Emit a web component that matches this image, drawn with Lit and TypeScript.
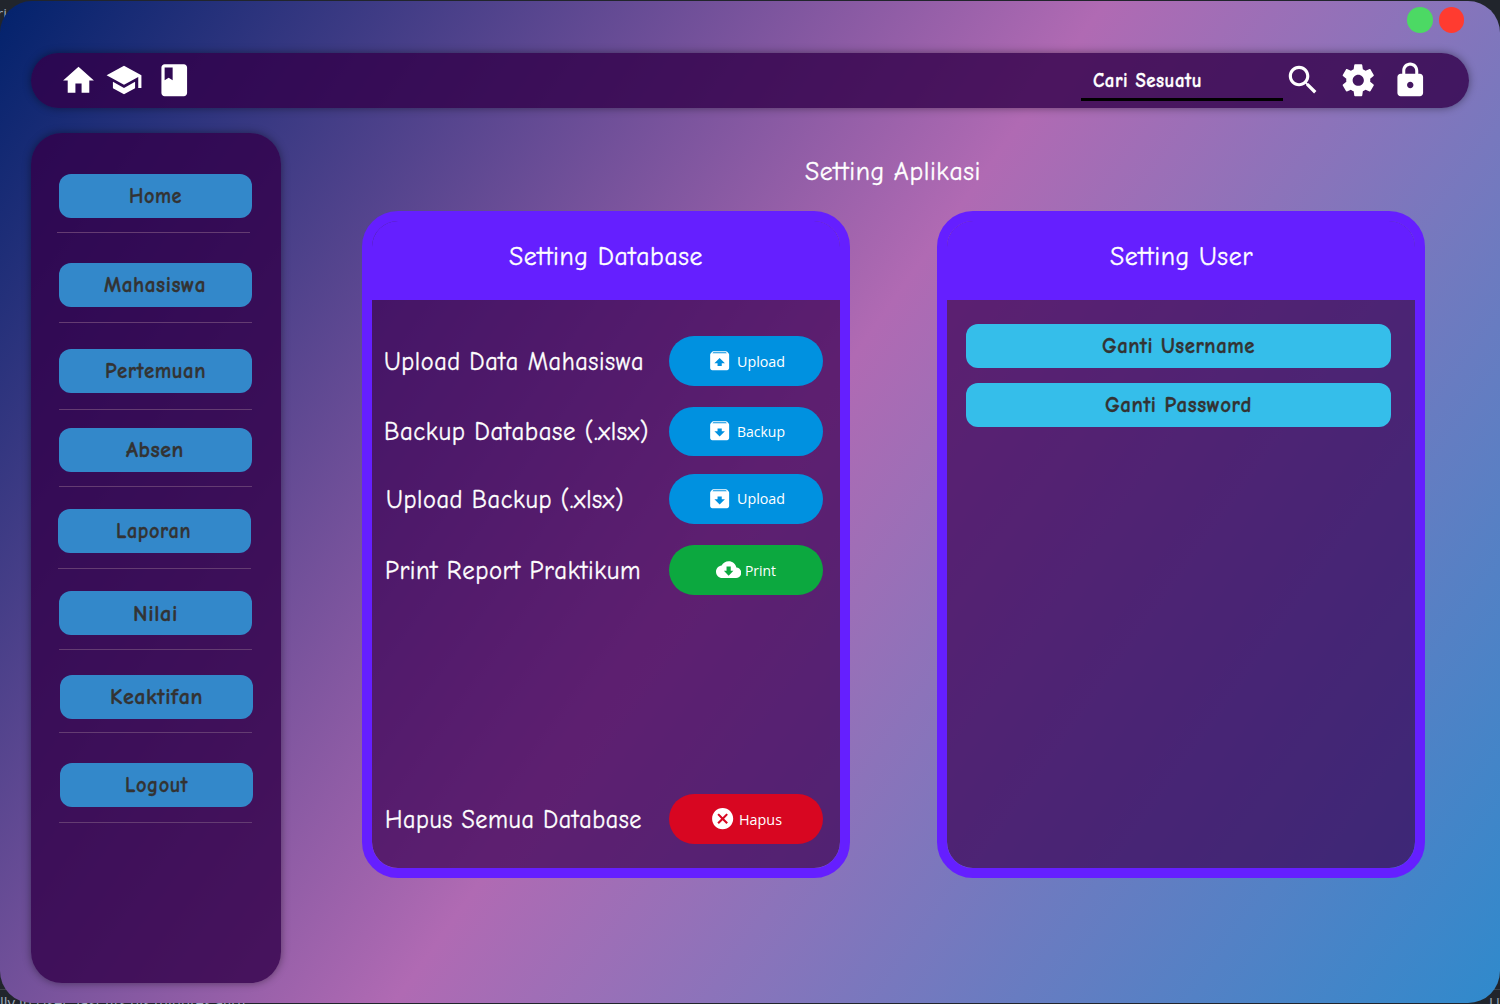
import { LitElement, html, css, svg } from "lit";
import { customElement, property } from "lit/decorators.js";

const ICONS: Record<string, string> = {
  home: "M10 20v-6h4v6h5v-8h3L12 3 2 12h3v8z",
  school: "M5 13.18v4L12 21l7-3.82v-4L12 17l-7-3.82zM12 3L1 9l11 6 9-4.91V17h2V9L12 3z",
  book: "M18 2H6c-1.1 0-2 .9-2 2v16c0 1.1.9 2 2 2h12c1.1 0 2-.9 2-2V4c0-1.1-.9-2-2-2zM6 4h5v8l-2.5-1.5L6 12V4z",
  search:
    "M15.5 14h-.79l-.28-.27C15.41 12.59 16 11.11 16 9.5 16 5.91 13.09 3 9.5 3S3 5.91 3 9.5 5.91 16 9.5 16c1.61 0 3.09-.59 4.23-1.57l.27.28v.79l5 4.99L20.49 19l-4.99-5zm-6 0C7.01 14 5 11.99 5 9.5S7.01 5 9.5 5 14 7.01 14 9.5 11.99 14 9.5 14z",
  settings:
    "M19.43 12.98c.04-.32.07-.64.07-.98s-.03-.66-.07-.98l2.11-1.65c.19-.15.24-.42.12-.64l-2-3.46c-.12-.22-.39-.3-.61-.22l-2.49 1c-.52-.4-1.08-.73-1.69-.98l-.38-2.65C14.46 2.18 14.25 2 14 2h-4c-.25 0-.46.18-.49.42l-.38 2.65c-.61.25-1.17.59-1.69.98l-2.49-1c-.23-.09-.49 0-.61.22l-2 3.46c-.13.22-.07.49.12.64l2.11 1.65c-.04.32-.07.65-.07.98s.03.66.07.98l-2.11 1.65c-.19.15-.24.42-.12.64l2 3.46c.12.22.39.3.61.22l2.49-1c.52.4 1.08.73 1.69.98l.38 2.65c.03.24.24.42.49.42h4c.25 0 .46-.18.49-.42l.38-2.65c.61-.25 1.17-.59 1.69-.98l2.49 1c.23.09.49 0 .61-.22l2-3.46c.12-.22.07-.49-.12-.64l-2.11-1.65zM12 15.5c-1.93 0-3.5-1.57-3.5-3.5s1.57-3.5 3.5-3.5 3.5 1.57 3.5 3.5-1.57 3.5-3.5 3.5z",
  lock: "M18 8h-1V6c0-2.76-2.24-5-5-5S7 3.24 7 6v2H6c-1.1 0-2 .9-2 2v10c0 1.1.9 2 2 2h12c1.1 0 2-.9 2-2V10c0-1.1-.9-2-2-2zm-6 9c-1.1 0-2-.9-2-2s.9-2 2-2 2 .9 2 2-.9 2-2 2zm3.1-9H8.9V6c0-1.71 1.39-3.1 3.1-3.1 1.71 0 3.1 1.39 3.1 3.1v2z",
  unarchive:
    "M20.55 5.22l-1.39-1.68C18.88 3.21 18.47 3 18 3H6c-.47 0-.88.21-1.15.55L3.46 5.22C3.17 5.57 3 6.01 3 6.5V19c0 1.1.89 2 2 2h14c1.1 0 2-.9 2-2V6.5c0-.49-.17-.93-.45-1.28zM12 9.5l5 5H14v2.5h-4v-2.5H7L12 9.5zM5.12 5l.82-1h12l.93 1H5.12z",
  archive:
    "M20.54 5.23l-1.39-1.68C18.88 3.21 18.47 3 18 3H6c-.47 0-.88.21-1.16.55L3.46 5.23C3.17 5.57 3 6.02 3 6.5V19c0 1.1.9 2 2 2h14c1.1 0 2-.9 2-2V6.5c0-.48-.17-.93-.46-1.27zM12 17.5L7 12.5h3V10h4v2.5h3L12 17.5zM5.12 5l.81-1h12l.94 1H5.12z",
  cloud:
    "M19.35 10.04C18.67 6.59 15.64 4 12 4 9.11 4 6.6 5.64 5.35 8.04 2.34 8.36 0 10.91 0 14c0 3.31 2.69 6 6 6h13c2.76 0 5-2.24 5-5 0-2.64-2.05-4.78-4.65-4.96zM16.5 13L12 17.7 7.5 13H10V9h4v4h2.5z",
  cancel:
    "M12 2C6.47 2 2 6.47 2 12s4.47 10 10 10 10-4.47 10-10S17.53 2 12 2zm5 13.59L15.59 17 12 13.41 8.41 17 7 15.59 10.59 12 7 8.41 8.41 7 12 10.59 15.59 7 17 8.41 13.41 12 17 15.59z",
};

@customElement("app-icon")
class AppIcon extends LitElement {
  @property() name = "home";
  @property({ type: Number }) size = 24;
  static styles = css`
    :host { display: block; flex: none; }
    svg { display: block; fill: currentColor; }
  `;
  render() {
    return html`<svg width=${this.size} height=${this.size} viewBox="0 0 24 24">
      ${svg`<path fill-rule="evenodd" d=${ICONS[this.name]}></path>`}
    </svg>`;
  }
}

/* One line of text set to a fixed advance width; drop is the baseline's
   distance below the middle of the line, in ems. */
@customElement("line-text")
class LineText extends LitElement {
  @property() text = "";
  @property({ type: Number }) width = 100;
  @property({ type: Number }) size = 26;
  @property({ type: Number }) drop = 0.34;
  static styles = css`
    :host { display: block; flex: none; --edge: 0.35px; --track: 0.6px; }
    :host([plain]) { --edge: 0; --track: 0; }
    svg { display: block; overflow: visible; fill: currentColor; }
    text {
      font-variant-ligatures: none;
      font-kerning: none;
      letter-spacing: var(--track);
      stroke: currentColor;
      stroke-width: var(--edge);
    }
  `;
  render() {
    const h = this.size * 1.4;
    return html`<svg width=${this.width} height=${h}>
      ${svg`<text x="0" y=${h / 2 + this.size * this.drop} font-size=${this.size}
        textLength=${this.width} lengthAdjust="spacingAndGlyphs">${this.text}</text>`}
    </svg>`;
  }
}

/* shift: horizontal nudge; gap: button to divider; after: divider to next button */
const NAV = [
  { label: "Home", w: 53, shift: 0, line: -2, gap: 14, after: 29.7 },
  { label: "Mahasiswa", w: 102, shift: 0, line: 0, gap: 15, after: 26.3 },
  { label: "Pertemuan", w: 101, shift: 0, line: 0, gap: 16, after: 18 },
  { label: "Absen", w: 58, shift: 0, line: 0, gap: 14, after: 22 },
  { label: "Laporan", w: 75, shift: -1.3, line: -1, gap: 15, after: 22.5 },
  { label: "Nilai", w: 45, shift: 0, line: 0, gap: 14, after: 24.5 },
  { label: "Keaktifan", w: 93, shift: 1, line: 0, gap: 13, after: 30 },
  { label: "Logout", w: 63, shift: 1, line: 0, gap: 15, after: 0 },
];

const ACTIONS = [
  { label: "Upload Data Mahasiswa", w: 260, x: -0.5, top: 36.5, btn: "Upload", bw: 48, icon: "unarchive", tone: "blue" },
  { label: "Backup Database (.xlsx)", w: 265, x: -0.5, top: 20.3, btn: "Backup", bw: 48, icon: "archive", tone: "blue" },
  { label: "Upload Backup (.xlsx)", w: 238, x: 1, top: 17.7, btn: "Upload", bw: 48, icon: "archive", tone: "blue" },
  { label: "Print Report Praktikum", w: 256, x: 0.5, top: 21.4, btn: "Print", bw: 31, icon: "cloud", tone: "green" },
  { label: "Hapus Semua Database", w: 257, x: 0.5, top: 199.2, btn: "Hapus", bw: 43, icon: "cancel", tone: "red" },
];

@customElement("app-root")
class AppRoot extends LitElement {
  static styles = css`
    :host {
      display: block;
      position: relative;
      width: 1500px;
      height: 1004px;
      overflow: hidden;
      background: #21252c;
      color: #fff;
      font-family: "Comic Sans MS", "Comic Neue", cursive, "Open Sans", sans-serif;
    }
    * { box-sizing: border-box; }
    .behind {
      position: absolute;
      font: 15px/20px "Open Sans", sans-serif;
      color: #9aa7b8;
      white-space: nowrap;
    }
    .b1 { left: -3px; top: 3px; }
    .b2 { left: 0; top: 992px; }
    .b3 { left: 1394px; top: 998px; }
    .b4 { left: 1489px; top: 992px; }
    .rule { position: absolute; left: 0; right: 0; top: 989px; height: 1px; background: #3c4148; }
    .window {
      position: relative;
      height: 1001.5px;
      margin-top: 1px;
      border-radius: 32px;
      background: linear-gradient(125.4deg, #02226c 0%, #b06ab3 50%, #2f8acc 100%);
      display: flex;
      flex-direction: column;
      padding: 0 31px;
    }
    .titlebar {
      height: 51.6px;
      display: flex;
      justify-content: flex-end;
      gap: 6px;
      padding: 6.2px 5px 0 0;
      flex: none;
    }
    .dot { width: 25.5px; height: 25.5px; border-radius: 50%; }
    .min { background: #4cd964; }
    .close { background: #ff3b30; }
    .toolbar {
      height: 55px;
      flex: none;
      border-radius: 30px;
      background: rgba(50, 0, 74, 0.8);
      box-shadow: 0 0 9px rgba(0, 0, 0, 0.42);
      display: flex;
      align-items: center;
      padding: 0 40px 0 28.6px;
    }
    .i-school { margin-left: 8.4px; }
    .i-book { margin-left: 11.6px; }
    .search {
      margin-left: auto;
      width: 202px;
      height: 37px;
      margin-bottom: -5px;
      border-bottom: 3px solid #000;
      padding: 1px 0 0 11.5px;
      font-weight: 700;
    }
    .i-search { margin-left: 1px; }
    .i-settings { margin-left: 16.7px; }
    .i-lock { margin-left: 13.4px; margin-right: -0.2px; }
    .main { display: flex; margin-top: 25px; }
    .sidebar {
      width: 250px;
      height: 850px;
      flex: none;
      border-radius: 31px;
      background: rgba(50, 0, 74, 0.8);
      box-shadow: 0 0 9px rgba(0, 0, 0, 0.42);
      padding: 41.3px 29px 0 28px;
    }
    .nav {
      width: 193px;
      height: 44px;
      border-radius: 12px;
      background: #3388ca;
      color: #333;
      font-weight: 700;
      display: flex;
      align-items: center;
      justify-content: center;
      padding-right: 1px;
    }
    .divider { width: 193px; height: 1px; background: #643c72; }
    .content { flex: none; width: 1063px; margin-left: 81px; }
    .title { display: flex; justify-content: center; padding: 20px 1px 0 0; height: 78.4px; }
    .cards { display: flex; justify-content: space-between; }
    .card {
      width: 488px;
      height: 667px;
      border: 10px solid #651fff;
      border-radius: 36px;
      background: rgba(58, 0, 84, 0.7) padding-box;
      overflow: hidden;
    }
    .head {
      height: 79px;
      margin: 0 -1px;
      background: #651fff;
      display: flex;
      align-items: center;
      justify-content: center;
      padding-bottom: 8px;
    }
    .row {
      height: 49.8px;
      display: flex;
      align-items: center;
      justify-content: space-between;
      padding: 0 17.5px 0 12.5px;
    }
    .action {
      width: 154px;
      height: 49.8px;
      border-radius: 25px;
      display: flex;
      align-items: center;
      justify-content: center;
      gap: 4px;
      padding-left: 0.8px;
      font-family: "Segoe UI", "Open Sans", sans-serif;
    }
    .action app-icon { margin-top: -1px; }
    .blue { background: #0091e0; }
    .green { background: #0ca83f; }
    .red { background: #d80621; }
    .user { display: flex; flex-direction: column; gap: 14.7px; padding: 24px 13.5px 0 19px; }
    .cyan {
      height: 44px;
      width: 425px;
      border-radius: 12px;
      background: #35beea;
      color: #333;
      font-weight: 700;
      display: flex;
      align-items: center;
      justify-content: center;
    }
  `;

  render() {
    return html`
      <div class="behind b1">ri</div>
      <div class="rule"></div>
      <div class="behind b2">lly in User, last fits his minutes ago)</div>
      <div class="behind b3">(CRLF) (4 SP</div>
      <div class="behind b4">UT</div>
      <div class="window">
        <div class="titlebar">
          <div class="dot min"></div>
          <div class="dot close"></div>
        </div>
        <div class="toolbar">
          <app-icon name="home" size="37"></app-icon>
          <app-icon class="i-school" name="school" size="38"></app-icon>
          <app-icon class="i-book" name="book" size="38.5"></app-icon>
          <div class="search"><line-text text="Cari Sesuatu" width="109" size="21"></line-text></div>
          <app-icon class="i-search" name="search" size="38"></app-icon>
          <app-icon class="i-settings" name="settings" size="38.5"></app-icon>
          <app-icon class="i-lock" name="lock" size="38.5"></app-icon>
        </div>
        <div class="main">
          <div class="sidebar">
            ${NAV.map(
              (n) => html`
                <div class="nav" style="margin-left:${n.shift}px">
                  <line-text text=${n.label} width=${n.w} size="22.5"></line-text>
                </div>
                <div class="divider" style="margin:${n.gap}px 0 ${n.after}px ${n.line}px"></div>
              `
            )}
          </div>
          <div class="content">
            <div class="title"><line-text text="Setting Aplikasi" width="176"></line-text></div>
            <div class="cards">
              <div class="card">
                <div class="head"><line-text text="Setting Database" width="194"></line-text></div>
                ${ACTIONS.map(
                  (a) => html`
                    <div class="row" style="margin-top:${a.top}px">
                      <line-text style="margin-left:${a.x}px" text=${a.label} width=${a.w}></line-text>
                      <div class="action ${a.tone}">
                        <app-icon name=${a.icon} size="25.3"></app-icon>
                        <line-text plain text=${a.btn} width=${a.bw} size="15" drop="0.38"></line-text>
                      </div>
                    </div>
                  `
                )}
              </div>
              <div class="card">
                <div class="head"><line-text text="Setting User" width="143"></line-text></div>
                <div class="user">
                  <div class="cyan"><line-text text="Ganti Username" width="153" size="22.5"></line-text></div>
                  <div class="cyan"><line-text text="Ganti Password" width="147" size="22.5"></line-text></div>
                </div>
              </div>
            </div>
          </div>
        </div>
      </div>
    `;
  }
}
